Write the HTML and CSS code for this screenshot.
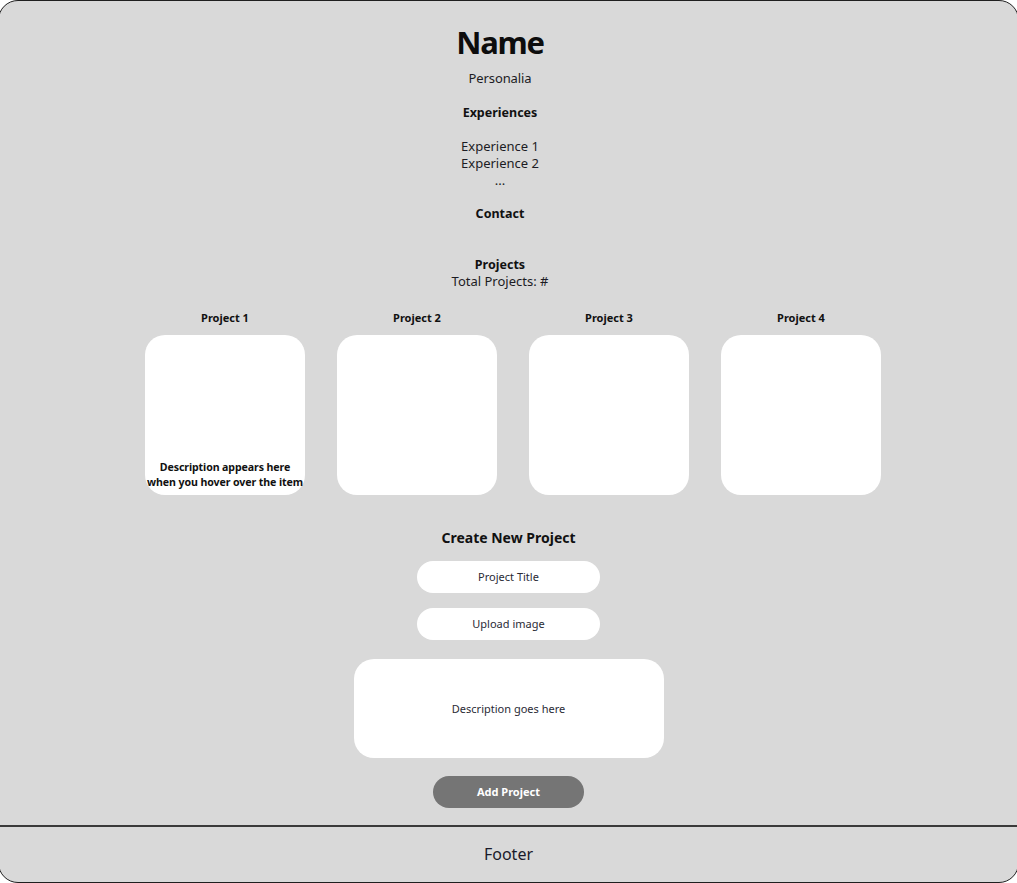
FILE: index.html
```html
<!DOCTYPE html>
<html lang="en">
<head>
<meta charset="utf-8">
<title>Portfolio</title>
<link rel="stylesheet" href="styles.css">
</head>
<body>
<div class="frame">
  <main class="main">
    <section class="intro">
      <h1 class="name">Name</h1>
      <p class="personalia">Personalia</p>
      <h2 class="label experiences">Experiences</h2>
      <ul class="exp-list">
        <li>Experience 1</li>
        <li>Experience 2</li>
        <li>...</li>
      </ul>
      <h2 class="label contact">Contact</h2>
      <h2 class="label projects">Projects</h2>
      <p class="total">Total Projects: #</p>
    </section>

    <section class="grid">
      <div class="project">
        <h3 class="project-title">Project 1</h3>
        <div class="card">
          <p class="card-desc">Description appears here<br>when you hover over the item</p>
        </div>
      </div>
      <div class="project">
        <h3 class="project-title">Project 2</h3>
        <div class="card"></div>
      </div>
      <div class="project">
        <h3 class="project-title">Project 3</h3>
        <div class="card"></div>
      </div>
      <div class="project">
        <h3 class="project-title">Project 4</h3>
        <div class="card"></div>
      </div>
    </section>

    <section class="create">
      <h2 class="create-title">Create New Project</h2>
      <div class="pill">Project Title</div>
      <div class="pill upload">Upload image</div>
      <div class="desc-box">Description goes here</div>
      <button class="add-btn" type="button">Add Project</button>
    </section>
  </main>
  <footer class="footer">Footer</footer>
</div>
</body>
</html>
```

FILE: styles.css
```css
* { box-sizing: border-box; }

html, body {
  margin: 0;
  padding: 0;
  background: #ffffff;
}

body {
  font-family: "Noto Sans", "Open Sans", sans-serif;
  color: #1c1c24;
  overflow: hidden;
}

.frame {
  width: 1021px;
  height: 883px;
  margin-left: -2px;
  background: #d9d9d9;
  border: 1px solid #1f1f1f;
  border-radius: 20px;
  display: flex;
  flex-direction: column;
  overflow: hidden;
}

.main {
  height: 824px;
  display: flex;
  flex-direction: column;
  align-items: center;
}

.intro {
  display: flex;
  flex-direction: column;
  align-items: center;
  padding-right: 17px;
  width: 100%;
}

.name {
  margin: 21px 0 0;
  font-size: 31px;
  line-height: 40px;
  font-weight: 700;
  letter-spacing: -1.2px;
  color: #0d0d0d;
}

.personalia {
  margin: 7px 0 0;
  font-size: 13px;
  line-height: 18px;
  letter-spacing: -0.1px;
}

.label {
  margin: 0;
  font-size: 12.5px;
  line-height: 18px;
  font-weight: 700;
  color: #111;
}

.experiences { margin-top: 17px; }

.exp-list {
  list-style: none;
  margin: 16px 0 0;
  padding: 0;
  font-size: 13px;
  line-height: 17px;
  text-align: center;
}

.contact { margin-top: 16px; }
.projects { margin-top: 33px; line-height: 17px; }

.total {
  margin: 0;
  font-size: 13px;
  line-height: 17px;
}

.grid {
  display: flex;
  gap: 32px;
  margin-top: 20px;
  padding-left: 9px;
}

.project {
  display: flex;
  flex-direction: column;
  align-items: center;
}

.project-title {
  margin: 0;
  font-size: 11px;
  line-height: 16px;
  font-weight: 700;
  color: #111;
}

.card {
  margin-top: 9px;
  width: 160px;
  height: 160px;
  background: #ffffff;
  border-radius: 20px;
  display: flex;
  flex-direction: column;
  justify-content: flex-end;
  align-items: center;
}

.card-desc {
  margin: 0 0 5px;
  font-size: 10.6px;
  line-height: 15px;
  font-weight: 700;
  letter-spacing: -0.1px;
  text-align: center;
  color: #111;
  white-space: nowrap;
}

.create {
  display: flex;
  flex-direction: column;
  align-items: center;
}

.create-title {
  margin: 33px 0 0;
  font-size: 14px;
  line-height: 20px;
  font-weight: 700;
  color: #111;
}

.pill {
  margin-top: 13px;
  width: 183px;
  height: 32px;
  background: #ffffff;
  border-radius: 16px;
  display: flex;
  align-items: center;
  justify-content: center;
  font-size: 11px;
  color: #2a2a35;
  padding-bottom: 1px;
}

.upload { margin-top: 15px; }

.desc-box {
  margin-top: 19px;
  width: 310px;
  height: 99px;
  background: #ffffff;
  border-radius: 20px;
  display: flex;
  align-items: center;
  justify-content: center;
  font-size: 11px;
  color: #2a2a35;
}

.add-btn {
  margin-top: 18px;
  width: 151px;
  height: 32px;
  border: none;
  border-radius: 16px;
  background: #757575;
  color: #ffffff;
  font-family: inherit;
  font-size: 11px;
  font-weight: 700;
  padding: 0 0 1px;
}

.footer {
  border-top: 2px solid #3a3a3a;
  flex: 1;
  display: flex;
  align-items: center;
  justify-content: center;
  font-size: 16px;
  color: #1a1a2a;
  padding-bottom: 2px;
}
```
